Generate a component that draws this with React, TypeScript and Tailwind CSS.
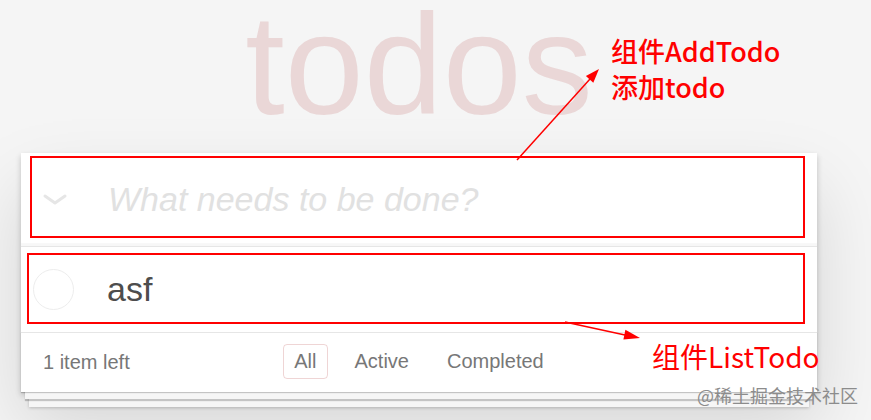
import React from "react";

export default function App() {
  return (
    <div
      className="relative w-[871px] h-[420px] overflow-hidden bg-[#f5f5f5]"
      style={{ fontFamily: '"Liberation Sans", Arial, sans-serif' }}
    >
      {/* title */}
      <div className="ml-[21px] w-[796px] h-[153px] pt-[5px] text-center">
        <h1 className="text-[142px] leading-[120px] font-normal text-[rgba(175,47,47,0.15)]">
          todos
        </h1>
      </div>

      {/* card */}
      <section className="relative ml-[21px] w-[796px] bg-white shadow-[0_3px_6px_0_rgba(0,0,0,0.2),0_35px_70px_0_rgba(0,0,0,0.13)]">
        {/* header input */}
        <div className="flex h-[93px] items-center pl-[22px] shadow-[inset_0_-3px_1px_rgba(0,0,0,0.03)]">
          <svg width="24" height="14" viewBox="0 0 24 14" className="shrink-0">
            <path
              d="M2 3 L12 10 L22 3"
              fill="none"
              stroke="#e6e6e6"
              strokeWidth="3"
              strokeLinecap="round"
              strokeLinejoin="round"
            />
          </svg>
          <span className="ml-[41px] text-[34px] italic text-[#e1e1e1]">
            What needs to be done?
          </span>
        </div>

        {/* list */}
        <div className="border-t border-[#e6e6e6]">
          <div className="flex h-[85px] items-center pl-[12px]">
            <div className="h-[41px] w-[41px] shrink-0 rounded-full border-[1.5px] border-[#ededed]" />
            <span className="ml-[33px] text-[34px] text-[#4d4d4d]">asf</span>
          </div>
        </div>

        {/* footer */}
        <div className="grid h-[60px] grid-cols-[1fr_auto_1fr] items-center border-t border-[#e6e6e6] px-[22px] pb-[2px] text-[20px] text-[#777] shadow-[0_1px_1px_rgba(0,0,0,0.2),0_11px_0_-4px_#f6f6f6,0_13px_1px_-4px_rgba(0,0,0,0.2),0_23px_0_-8px_#f6f6f6,0_24px_3px_-8px_rgba(0,0,0,0.2)]">
          <span>1 item left</span>
          <div className="flex items-center">
            <span className="mx-[8px] rounded-[4px] border border-[rgba(175,47,47,0.2)] px-[10px] py-[4px] leading-[25px]">
              All
            </span>
            <span className="mx-[8px] rounded-[4px] border border-transparent px-[10px] py-[4px] leading-[25px]">
              Active
            </span>
            <span className="mx-[8px] rounded-[4px] border border-transparent px-[10px] py-[4px] leading-[25px]">
              Completed
            </span>
          </div>
          <span />
        </div>
      </section>

      {/* annotation boxes */}
      <div className="absolute left-[30px] top-[156px] h-[82px] w-[775px] border-2 border-[#ff0000]" />
      <div className="absolute left-[27px] top-[253px] h-[71px] w-[778px] border-2 border-[#ff0000]" />

      {/* arrows */}
      <svg
        className="pointer-events-none absolute left-0 top-0"
        width="871"
        height="420"
        viewBox="0 0 871 420"
      >
        <line x1="517" y1="160" x2="590" y2="79" stroke="#ff0000" strokeWidth="1.5" />
        <polygon points="599,69 593.3,82.7 585.9,76.1" fill="#ff0000" />
        <line x1="565" y1="322" x2="625" y2="335" stroke="#ff0000" strokeWidth="1.5" />
        <polygon points="640,338 623.4,339.6 625.4,329.8" fill="#ff0000" />
      </svg>

      {/* labels */}
      <div
        className="absolute left-[611px] top-[33px] text-[27px] font-medium leading-[36px] text-[#ff0000]"
        style={{ fontFamily: '"Noto Sans CJK SC", "Liberation Sans", sans-serif' }}
      >
        <div>组件AddTodo</div>
        <div>添加todo</div>
      </div>
      <div
        className="absolute left-[652px] top-[337px] text-[28px] leading-[38px] text-[#ff0000]"
        style={{ fontFamily: '"Noto Sans CJK SC", "Liberation Sans", sans-serif' }}
      >
        组件ListTodo
      </div>
      <div
        className="absolute left-[697px] top-[382px] text-[18px] leading-[26px] text-[#8c8c8c]"
        style={{ fontFamily: '"Noto Sans CJK SC", "Liberation Sans", sans-serif' }}
      >
        @稀土掘金技术社区
      </div>
    </div>
  );
}
